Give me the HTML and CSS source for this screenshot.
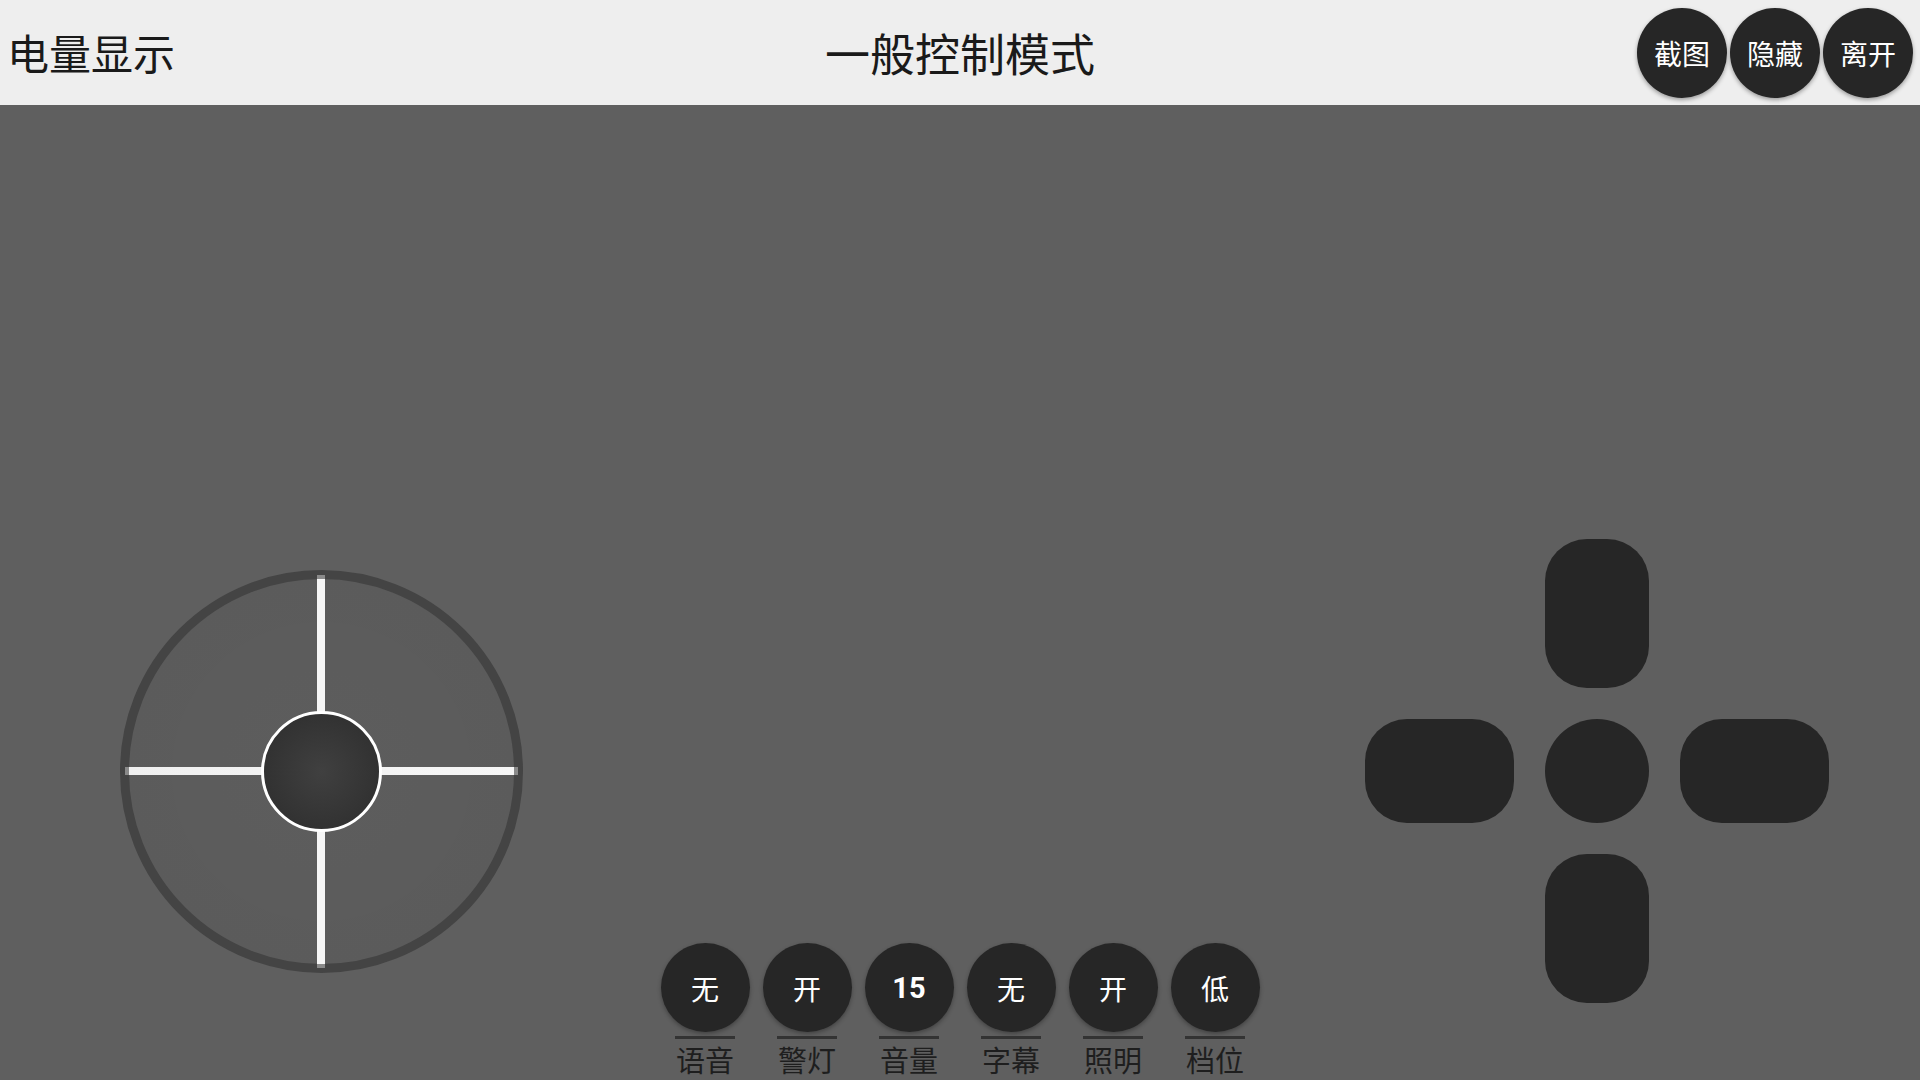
FILE: index.html
```html
<!DOCTYPE html>
<html lang="zh">
<head>
<meta charset="utf-8">
<title>一般控制模式</title>
<link rel="stylesheet" href="styles.css">
</head>
<body>
<header class="topbar">
  <div class="battery">电量显示</div>
  <div class="title">一般控制模式</div>
  <div class="actions">
    <button class="round-btn">截图</button>
    <button class="round-btn">隐藏</button>
    <button class="round-btn">离开</button>
  </div>
</header>
<main class="stage">
  <div class="joystick">
    <div class="ring"></div>
    <div class="axis axis-v"></div>
    <div class="axis axis-h"></div>
    <div class="knob"></div>
  </div>
  <div class="toggles">
    <div class="toggle"><div class="toggle-btn">无</div><div class="toggle-line"></div><div class="toggle-label">语音</div></div>
    <div class="toggle"><div class="toggle-btn">开</div><div class="toggle-line"></div><div class="toggle-label">警灯</div></div>
    <div class="toggle"><div class="toggle-btn num">15</div><div class="toggle-line"></div><div class="toggle-label">音量</div></div>
    <div class="toggle"><div class="toggle-btn">无</div><div class="toggle-line"></div><div class="toggle-label">字幕</div></div>
    <div class="toggle"><div class="toggle-btn">开</div><div class="toggle-line"></div><div class="toggle-label">照明</div></div>
    <div class="toggle"><div class="toggle-btn">低</div><div class="toggle-line"></div><div class="toggle-label">档位</div></div>
  </div>
  <div class="dpad">
    <div class="pad pad-up"></div>
    <div class="pad pad-left"></div>
    <div class="pad pad-center"></div>
    <div class="pad pad-right"></div>
    <div class="pad pad-down"></div>
  </div>
</main>
</body>
</html>
```
FILE: styles.css
```css
* { box-sizing: border-box; }
html, body {
  margin: 0;
  padding: 0;
  width: 1920px;
  height: 1080px;
  overflow: hidden;
  font-family: "Noto Sans CJK SC", "Noto Sans", sans-serif;
  background: #5f5f5f;
}
.topbar {
  height: 105px;
  background: #eeeeee;
  display: grid;
  grid-template-columns: 1fr auto 1fr;
  align-items: center;
}
.battery {
  font-size: 42px;
  color: #1a1a1a;
  padding-left: 7px;
  line-height: 1;
  margin-top: -1px;
}
.title {
  font-size: 45px;
  color: #1a1a1a;
  line-height: 1;
  margin-top: -1px;
}
.actions {
  justify-self: end;
  display: flex;
  gap: 3px;
  padding-right: 7px;
}
.round-btn {
  width: 90px;
  height: 90px;
  border-radius: 50%;
  border: none;
  background: #262626;
  color: #ffffff;
  font-family: "Noto Sans CJK SC", sans-serif;
  font-size: 28px;
  padding: 0;
  box-shadow: 0 2px 4px rgba(0,0,0,0.35);
}
.stage {
  height: 975px;
  display: grid;
  grid-template-columns: 1fr auto 1fr;
}
.joystick {
  position: relative;
  width: 403px;
  height: 403px;
  margin-top: 465px;
  margin-left: 120px;
  justify-self: start;
}
.ring {
  position: absolute;
  inset: 0;
  border-radius: 50%;
  border: 9px solid #444444;
  background: radial-gradient(circle at 50% 50%, rgba(0,0,0,0.02), rgba(0,0,0,0.05));
}
.axis {
  position: absolute;
}
.axis-v {
  left: 197px;
  width: 8px;
  top: 5px;
  bottom: 5px;
  background: linear-gradient(to bottom, #8a8a8a 0, #8a8a8a 4px, #f6f6f6 4px, #f6f6f6 calc(100% - 4px), #8a8a8a calc(100% - 4px));
}
.axis-h {
  top: 197px;
  height: 8px;
  left: 5px;
  right: 5px;
  background: linear-gradient(to right, #8a8a8a 0, #8a8a8a 4px, #f0f0f0 4px, #f6f6f6 calc(100% - 4px), #8a8a8a calc(100% - 4px));
}
.knob {
  position: absolute;
  left: 141px;
  top: 141px;
  width: 121px;
  height: 121px;
  border-radius: 50%;
  border: 3px solid #ffffff;
  background: radial-gradient(circle at 50% 50%, #404040 0%, #2c2c2c 100%);
}
.toggles {
  align-self: end;
  display: flex;
  gap: 13px;
  height: 137px;
}
.toggle {
  width: 89px;
  display: flex;
  flex-direction: column;
  align-items: center;
}
.toggle-btn {
  width: 89px;
  height: 89px;
  border-radius: 50%;
  background: #262626;
  color: #ffffff;
  font-size: 28px;
  display: flex;
  align-items: center;
  justify-content: center;
  box-shadow: 0 2px 4px rgba(0,0,0,0.3);
}
.toggle-btn.num {
  font-family: Roboto, sans-serif;
  font-weight: 700;
  font-size: 29px;
}
.toggle-line {
  width: 60px;
  height: 3px;
  background: #333333;
  margin-top: 4px;
}
.toggle-label {
  font-size: 29px;
  line-height: 1;
  color: #1e1e1e;
  margin-top: 6px;
  white-space: nowrap;
}
.dpad {
  justify-self: end;
  margin-right: 91px;
  margin-top: 434px;
  display: grid;
  grid-template-columns: 149px 104px 149px;
  grid-template-rows: 149px 104px 149px;
  gap: 31px;
  align-self: start;
}
.pad {
  background: #262626;
  border-radius: 42px;
}
.pad-up { grid-column: 2; grid-row: 1; }
.pad-left { grid-column: 1; grid-row: 2; }
.pad-center { grid-column: 2; grid-row: 2; border-radius: 50%; }
.pad-right { grid-column: 3; grid-row: 2; }
.pad-down { grid-column: 2; grid-row: 3; }
```
